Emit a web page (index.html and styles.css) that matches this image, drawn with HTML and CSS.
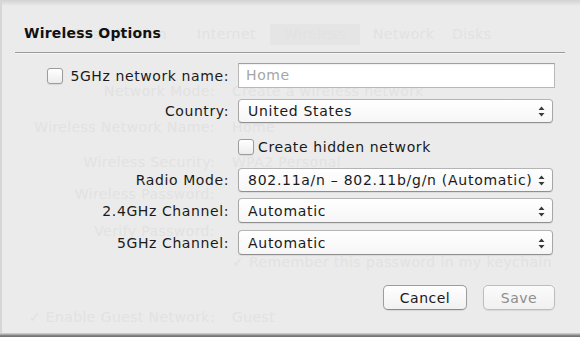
FILE: index.html
```html
<!DOCTYPE html>
<html>
<head>
<meta charset="utf-8">
<link rel="stylesheet" href="styles.css">
</head>
<body>
<div class="screen">
  <div class="ghost">
    <div class="g-tabs">
      <span class="g-tab">Base Station</span>
      <span class="g-tab">Internet</span>
      <span class="g-tab g-sel">Wireless</span>
      <span class="g-tab">Network</span>
      <span class="g-tab">Disks</span>
    </div>
    <div class="g-form">
      <span class="g-l">Network Mode:</span><span class="g-v">Create a wireless network</span>
      <span class="g-l">Wireless Network Name:</span><span class="g-v">Home</span>
      <span class="g-l">Wireless Security:</span><span class="g-v">WPA2 Personal</span>
      <span class="g-l">Wireless Password:</span><span class="g-v"></span>
      <span class="g-l">Verify Password:</span><span class="g-v"></span>
      <span class="g-l"></span><span class="g-v">✓ Remember this password in my keychain</span>
      <span class="g-l g7">✓ Enable Guest Network:</span><span class="g-v g7">Guest</span>
    </div>
  </div>

  <div class="sheet">
    <h1 class="title">Wireless Options</h1>
    <div class="rule"></div>
    <div class="form">
      <div class="row r1">
        <label class="lbl"><span class="cb"></span>5GHz network name:</label>
        <div class="field">Home</div>
      </div>
      <div class="row r2">
        <label class="lbl">Country:</label>
        <div class="popup"><span>United States</span>
          <svg class="arr" width="7" height="11" viewBox="0 0 7 11"><path d="M3.5 0.5L6.5 4H0.5Z M3.5 10.5L6.5 7H0.5Z" fill="#3a3a3a"/></svg>
        </div>
      </div>
      <div class="row r3">
        <span class="lbl"></span>
        <label class="chk"><span class="cb"></span>Create hidden network</label>
      </div>
      <div class="row r4">
        <label class="lbl">Radio Mode:</label>
        <div class="popup"><span>802.11a/n – 802.11b/g/n (Automatic)</span>
          <svg class="arr" width="7" height="11" viewBox="0 0 7 11"><path d="M3.5 0.5L6.5 4H0.5Z M3.5 10.5L6.5 7H0.5Z" fill="#3a3a3a"/></svg>
        </div>
      </div>
      <div class="row r5">
        <label class="lbl">2.4GHz Channel:</label>
        <div class="popup"><span>Automatic</span>
          <svg class="arr" width="7" height="11" viewBox="0 0 7 11"><path d="M3.5 0.5L6.5 4H0.5Z M3.5 10.5L6.5 7H0.5Z" fill="#3a3a3a"/></svg>
        </div>
      </div>
      <div class="row r6">
        <label class="lbl">5GHz Channel:</label>
        <div class="popup"><span>Automatic</span>
          <svg class="arr" width="7" height="11" viewBox="0 0 7 11"><path d="M3.5 0.5L6.5 4H0.5Z M3.5 10.5L6.5 7H0.5Z" fill="#3a3a3a"/></svg>
        </div>
      </div>
    </div>
    <div class="buttons">
      <button class="btn cancel">Cancel</button>
      <button class="btn save">Save</button>
    </div>
  </div>
</div>
</body>
</html>
```

FILE: styles.css
```css
* { box-sizing: border-box; }
html, body { margin: 0; padding: 0; }
body {
  width: 580px;
  height: 337px;
  overflow: hidden;
  font-family: "DejaVu Sans", "Noto Sans", sans-serif;
}
.screen {
  position: relative;
  width: 580px;
  height: 337px;
  overflow: hidden;
  background:
    linear-gradient(#d2d2d2, rgba(236,236,236,0) 6px),
    #ebebeb;
  box-shadow: inset 2px 0 0 #d6d6d6;
}
.screen::after {
  content: "";
  position: absolute;
  left: 0; right: 0; bottom: 0;
  height: 4px;
  background: linear-gradient(#c8c8c8 0, #c8c8c8 1px, #8a8a8a 2px, #6e6e6e 4px);
}

/* ghost window behind the sheet */
.ghost {
  position: absolute;
  inset: 0;
  color: #e2e2e2;
  font-size: 14px;
  letter-spacing: 0.4px;
}
.g-tabs {
  display: flex;
  margin: 24px 0 0 60px;
  height: 21px;
}
.g-tab {
  padding: 0 14px;
  line-height: 21px;
  white-space: nowrap;
}
.g-tabs .g-tab:nth-child(1) { width: 122px; }
.g-tabs .g-tab:nth-child(2) { width: 88px; padding-left: 15px; }
.g-sel { background: #e5e5e5; width: 90px; text-align: center; }
.g-tabs .g-tab:nth-child(4) { width: 90px; padding-left: 13px; }
.g-tabs .g-tab:nth-child(5) { padding-left: 2px; }
.g-form {
  display: grid;
  grid-template-columns: 215px 1fr;
  column-gap: 17px;
  grid-template-rows: 36px 35px 32px 37px 31px 55px 18px;
  margin-top: 37px;
  line-height: 18px;
}
.g-l { text-align: right; white-space: nowrap; }
.g-v { white-space: nowrap; }

/* sheet */
.sheet {
  position: relative;
  padding-top: 24px;
  color: #1a1a1a;
  font-size: 14px;
  letter-spacing: 0.6px;
}
.title {
  margin: 0 0 0 24px;
  font-size: 14px;
  font-weight: bold;
  line-height: 18px;
  letter-spacing: 0.2px;
  color: #111;
}
.rule {
  margin: 10px 0 0 15px;
  width: 550px;
  height: 1px;
  background: #9a9a9a;
  box-shadow: 0 1px 0 #f6f6f6;
}
.form { display: flex; flex-direction: column; }
.row {
  display: grid;
  grid-template-columns: 229px 317px;
  column-gap: 9px;
  align-items: center;
}
.r1 { margin-top: 10px; height: 25px; }
.r2 { margin-top: 11px; height: 24px; }
.r3 { margin-top: 15px; height: 17px; }
.r4 { margin-top: 13px; height: 24px; }
.r5 { margin-top: 6px; height: 25px; }
.r6 { margin-top: 7px; height: 25px; }
.lbl {
  display: flex;
  justify-content: flex-end;
  align-items: center;
  gap: 7px;
  white-space: nowrap;
}
.cb {
  display: inline-block;
  width: 16px;
  height: 16px;
  border: 1px solid #9c9c9c;
  border-radius: 3px;
  background: linear-gradient(#ffffff, #ececec);
  box-shadow: 0 1px 1px rgba(0,0,0,0.08);
}
.chk {
  display: flex;
  align-items: center;
  gap: 4px;
  white-space: nowrap;
}
.field {
  height: 25px;
  background: #fff;
  border: 1px solid #b8b8b8;
  border-top-color: #a0a0a0;
  box-shadow: inset 0 1px 1px rgba(0,0,0,0.06);
  color: #a6a6a6;
  padding-left: 7px;
  line-height: 23px;
}
.popup {
  position: relative;
  width: 315px;
  height: 100%;
  border: 1px solid #a6a6a6;
  border-top-color: #b4b4b4;
  border-bottom-color: #8f8f8f;
  border-radius: 4px;
  background: linear-gradient(#ffffff, #f6f6f6);
  box-shadow: 0 1px 1px rgba(0,0,0,0.07);
  display: flex;
  align-items: center;
  padding-left: 9px;
  white-space: nowrap;
  letter-spacing: 0.72px;
}
.arr {
  position: absolute;
  right: 7px;
  top: 50%;
  margin-top: -5px;
}
.buttons {
  display: flex;
  justify-content: flex-end;
  gap: 16px;
  margin: 30px 25px 0 0;
}
.btn {
  height: 25px;
  border: 1px solid #9d9d9d;
  border-bottom-color: #8a8a8a;
  border-radius: 5px;
  background: linear-gradient(#ffffff, #f1f1f1);
  box-shadow: 0 1px 1px rgba(0,0,0,0.08);
  font-family: "DejaVu Sans", "Noto Sans", sans-serif;
  font-size: 14px;
  letter-spacing: 0.5px;
  color: #1a1a1a;
  padding: 0;
}
.cancel { width: 84px; }
.save {
  width: 72px;
  color: #8e8e8e;
  border-color: #bdbdbd;
  background: linear-gradient(#fbfbfb, #f0f0f0);
}
```
